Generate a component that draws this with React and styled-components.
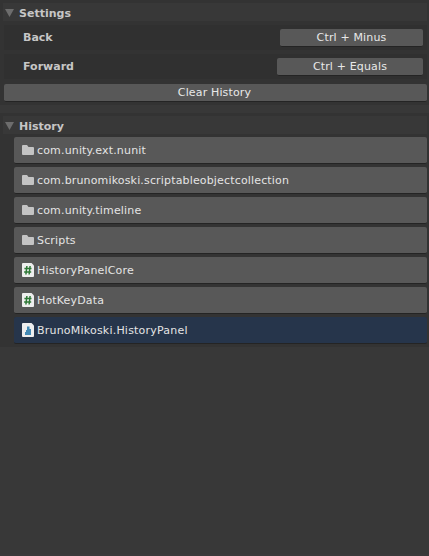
import React from "react";
import styled, { createGlobalStyle } from "styled-components";

const GlobalStyle = createGlobalStyle`
  * { box-sizing: border-box; }
  body { margin: 0; background: #383838; }
`;

const Window = styled.main`
  height: 556px;
  overflow: hidden;
  background: #383838;
  border-bottom: 2px solid #3a393a;
  font: 11px/16px "DejaVu Sans", sans-serif;
  color: #e4e4e4;
`;

const Section = styled.section`
  display: flex;
  flex-direction: column;
  background: #333333;
  padding: 3px 2px 3px 4px;
  margin-bottom: 8px;
`;

const Header = styled.header`
  display: flex;
  align-items: center;
  height: 18px;
  margin: 0 0 ${(p) => p.$gap}px -1px;
  padding: 2px 0 0 2px;
  gap: 5px;
  background: #383838;
`;

const Title = styled.h2`
  margin: 1px 0 0;
  font-size: 11px;
  line-height: 16px;
  font-weight: bold;
  color: #c6c6c6;
`;

const HotkeyRow = styled.div`
  display: flex;
  align-items: center;
  justify-content: space-between;
  height: 25px;
  margin-bottom: 4px;
  padding: 0 4px 0 19px;
  background: #303030;
`;

const HotkeyLabel = styled.span`
  font-weight: bold;
  color: #c6c6c6;
`;

const Button = styled.button`
  display: block;
  width: ${(p) => (p.$width ? `${p.$width}px` : "auto")};
  height: 18px;
  margin: ${(p) => (p.$width ? 0 : "1px 0 0")};
  padding: ${(p) => (p.$width ? "1px 0 0" : "0 2px 0 0")};
  border: 0;
  border-bottom: 1px solid #242424;
  border-radius: 2px;
  background: #585858;
  color: #e8e8e8;
  font: inherit;
  letter-spacing: 0.15px;
  text-align: center;
`;

const List = styled.ul`
  display: flex;
  flex-direction: column;
  gap: 3px;
  margin: 0 0 0 10px;
  padding: 0;
  list-style: none;
`;

const Entry = styled.li`
  display: flex;
  align-items: center;
  gap: 3px;
  height: 27px;
  padding: 1px 0 0 8px;
  border-bottom: 1px solid #242424;
  border-radius: 2px;
  background: ${(p) => (p.$selected ? "#26354b" : "#585858")};
  letter-spacing: ${(p) => (p.$selected ? 0.21 : 0.16)}px;
`;

const Icon = styled.svg`
  display: block;
  flex: none;
`;

const EntryIcon = styled(Icon)`
  margin-bottom: 1px;
`;

function Arrow() {
  return (
    <Icon width="9" height="8" viewBox="0 0 9 8">
      <path d="M0 0H9L4.5 8Z" fill="#6d6d6d" />
    </Icon>
  );
}

function FileIcon({ kind }) {
  if (kind === "folder") {
    return (
      <EntryIcon width="12" height="14" viewBox="0 0 12 14">
        <path d="M0 3Q0 2 1 2H5L6.5 4H11Q12 4 12 5V11Q12 12 11 12H1Q0 12 0 11Z" fill="#c4c4c4" />
      </EntryIcon>
    );
  }
  return (
    <EntryIcon width="12" height="14" viewBox="0 0 12 14">
      <path d="M1 0H9.5L12 2.5V13Q12 14 11 14H1Q0 14 0 13V1Q0 0 1 0Z" fill="#eeeeee" />
      {kind === "script" ? (
        <path d="M4.9 3L3.9 11.5M8.1 3L7.1 11.5M2.4 5.6H9.5M2.1 9H9.2" stroke="#2f7937" strokeWidth="1.5" fill="none" />
      ) : (
        <path d="M5 3.5H7.5V6H9V12H3V9H4V7H5Z" fill="#438ab5" />
      )}
    </EntryIcon>
  );
}

const hotkeys = [
  { label: "Back", keys: "Ctrl + Minus", width: 143 },
  { label: "Forward", keys: "Ctrl + Equals", width: 146 },
];

const entries = [
  { name: "com.unity.ext.nunit", kind: "folder" },
  { name: "com.brunomikoski.scriptableobjectcollection", kind: "folder" },
  { name: "com.unity.timeline", kind: "folder" },
  { name: "Scripts", kind: "folder" },
  { name: "HistoryPanelCore", kind: "script" },
  { name: "HotKeyData", kind: "script" },
  { name: "BrunoMikoski.HistoryPanel", kind: "assembly", selected: true },
];

export default function App() {
  return (
    <Window>
      <GlobalStyle />
      <Section>
        <Header $gap={4}>
          <Arrow />
          <Title>Settings</Title>
        </Header>
        {hotkeys.map((h) => (
          <HotkeyRow key={h.label}>
            <HotkeyLabel>{h.label}</HotkeyLabel>
            <Button $width={h.width}>{h.keys}</Button>
          </HotkeyRow>
        ))}
        <Button>Clear History</Button>
      </Section>
      <Section>
        <Header $gap={3}>
          <Arrow />
          <Title>History</Title>
        </Header>
        <List>
          {entries.map((e) => (
            <Entry key={e.name} $selected={e.selected}>
              <FileIcon kind={e.kind} />
              <span>{e.name}</span>
            </Entry>
          ))}
        </List>
      </Section>
    </Window>
  );
}
